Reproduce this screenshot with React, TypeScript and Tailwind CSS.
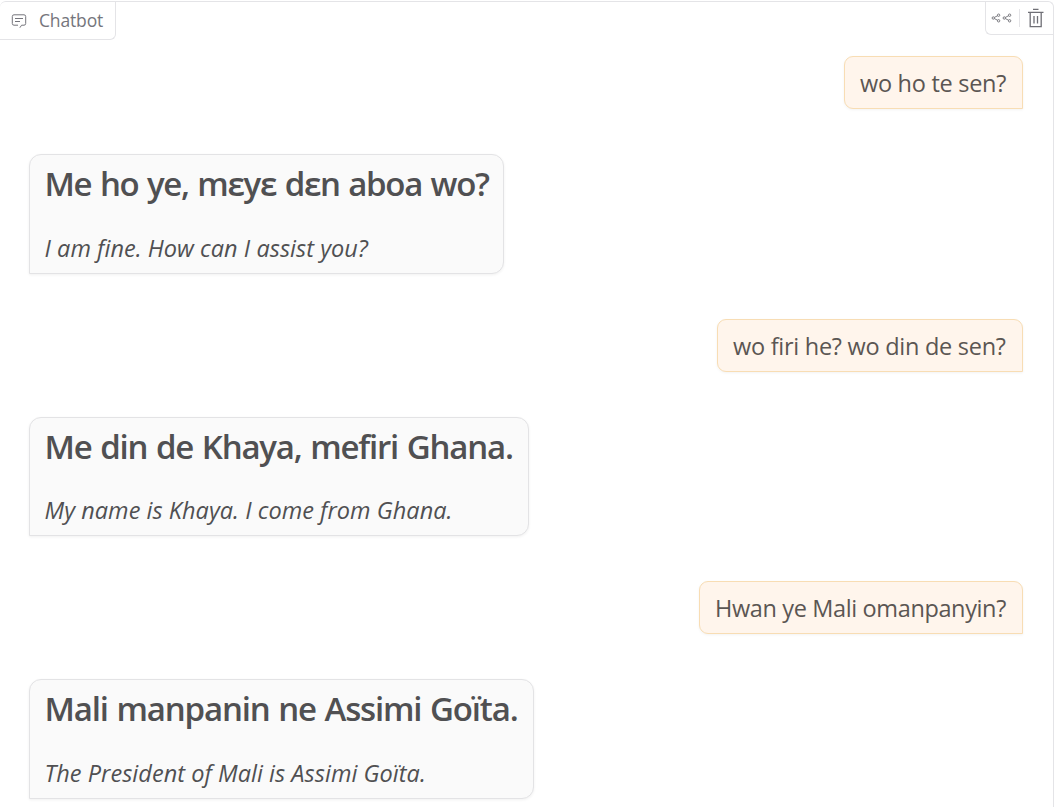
type BotReply = { title: string; translation: string; box: string; titleSpacing: string; textSpacing: string }

interface Exchange {
  question: string
  box: string
  spacing: string
  reply: BotReply
}

const EXCHANGES: Exchange[] = [
  {
    question: 'wo ho te sen?',
    box: 'w-[179px]',
    spacing: 'tracking-[-0.28px]',
    reply: {
      title: 'Me ho ye, mɛyɛ dɛn aboa wo?',
      translation: 'I am fine. How can I assist you?',
      box: 'w-[475px]',
      titleSpacing: 'tracking-[-1.3px] [word-spacing:1.3px]',
      textSpacing: 'tracking-[0.04px]',
    },
  },
  {
    question: 'wo firi he? wo din de sen?',
    box: 'w-[306px]',
    spacing: 'tracking-[-0.27px]',
    reply: {
      title: 'Me din de Khaya, mefiri Ghana.',
      translation: 'My name is Khaya. I come from Ghana.',
      box: 'w-[500px]',
      titleSpacing: 'tracking-[-1.2px] [word-spacing:1.3px]',
      textSpacing: 'tracking-[0.04px]',
    },
  },
  {
    question: 'Hwan ye Mali omanpanyin?',
    box: 'w-[324px]',
    spacing: 'tracking-[-0.37px]',
    reply: {
      title: 'Mali manpanin ne Assimi Goïta.',
      translation: 'The President of Mali is Assimi Goïta.',
      box: 'w-[505px]',
      titleSpacing: 'tracking-[-1.17px] [word-spacing:1.3px]',
      textSpacing: 'tracking-[0.04px]',
    },
  },
]

function ChatIcon() {
  return (
    <svg width="16" height="14" viewBox="0 0 16 14" fill="none" stroke="currentColor" strokeWidth="1">
      <path d="M7 11.2H3A1.7 1.7 0 0 1 1.3 9.5V2.5A1.7 1.7 0 0 1 3 .8h10a1.7 1.7 0 0 1 1.7 1.7v7a1.7 1.7 0 0 1-1.7 1.7h-2.4L8.9 13.7" />
      <path d="M4 4.5h8M4 7.5h5" />
    </svg>
  )
}

function ShareIcon() {
  return (
    <svg width="11" height="10" viewBox="0 0 11 10" fill="none" stroke="currentColor" strokeWidth="0.9">
      <circle cx="2.3" cy="5" r="1.2" />
      <circle cx="7.6" cy="2.2" r="1.2" />
      <circle cx="7.6" cy="7.8" r="1.2" />
      <path d="M3.4 4.4 6.5 2.8M3.4 5.6l3.1 1.6" />
    </svg>
  )
}

function TrashIcon() {
  return (
    <svg width="16" height="20" viewBox="0 0 16 20" fill="none" stroke="currentColor" strokeWidth="1.3">
      <path d="M5 1.3h5.5M0 4.3h15.5M2.2 4.3v14.3h11V4.3M6 8v7.5M9.5 8v7.5" />
    </svg>
  )
}

function UserBubble({ exchange }: { exchange: Exchange }) {
  return (
    <div
      className={`${exchange.box} h-[53px] self-end rounded-[9px] rounded-br-none border border-[#f8ddb4] bg-[#fff5ec] px-[15px] pt-[9px] text-[23.5px] leading-[34px] whitespace-nowrap text-[#5b5653] shadow-[0_1px_3px_rgba(0,0,0,0.05)]`}
    >
      <p className={exchange.spacing}>{exchange.question}</p>
    </div>
  )
}

function BotBubble({ reply }: { reply: BotReply }) {
  return (
    <div
      className={`${reply.box} my-[45px] h-[119.5px] rounded-xl rounded-bl-none border border-[#e3e3e5] bg-[#fafafa] pl-[14.5px] whitespace-nowrap text-[#505052] shadow-[0_1px_3px_rgba(0,0,0,0.06)]`}
    >
      <h2 className={`${reply.titleSpacing} pt-[6px] text-[33px] leading-[46px] font-semibold`}>{reply.title}</h2>
      <p className={`${reply.textSpacing} pt-[23.5px] text-[23.5px] leading-[34px] italic`}>{reply.translation}</p>
    </div>
  )
}

export default function App() {
  return (
    <main className="h-[807px] w-full overflow-hidden bg-white pt-px font-['Open_Sans','Noto_Sans',sans-serif]">
      <div className="h-[820px] w-[1054px] rounded-t-md border-t border-r border-[#e4e4e7]">
        <header className="flex h-[38px] items-start justify-between">
          <div className="flex h-[38px] w-[116px] items-center gap-3 rounded-br-md border-r border-b border-[#e4e4e7] pl-[11px] text-[#75757c]">
            <ChatIcon />
            <span className="-mt-0.5 text-[17.5px] leading-6 tracking-[-0.15px]">Chatbot</span>
          </div>
          <div className="flex h-[33px] w-[68px] items-center rounded-bl-md border-b border-l border-[#e4e4e7] pl-[5px] text-[#6f6f76]">
            <ShareIcon />
            <ShareIcon />
            <span className="mr-[8px] ml-[6px] h-[18px] w-px bg-[#e4e4e7]" />
            <TrashIcon />
          </div>
        </header>
        <section className="flex flex-col pt-[16px] pr-[30px] pl-[29px]">
          {EXCHANGES.map((exchange) => (
            <div key={exchange.question} className="flex flex-col">
              <UserBubble exchange={exchange} />
              <BotBubble reply={exchange.reply} />
            </div>
          ))}
        </section>
      </div>
    </main>
  )
}
